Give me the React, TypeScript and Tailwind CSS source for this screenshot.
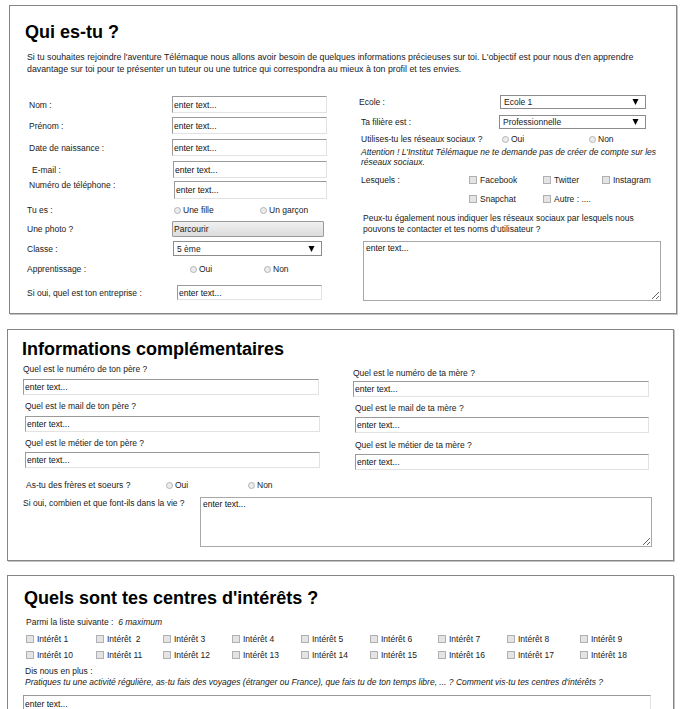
import React from "react";

const INPUT =
  "block bg-white border border-t-[#9a9a9a] border-l-[#9a9a9a] border-r-[#e2e2e2] border-b-[#e2e2e2] pl-[1px] text-[8.5px] text-[#111] outline-none font-['Liberation_Sans',Arial,sans-serif]";

function TextInput({ className }: { className: string }) {
  return <input readOnly value="enter text..." className={`${INPUT} ${className}`} />;
}

function Radio({ label, className = "" }: { label: string; className?: string }) {
  return (
    <span className={`flex items-center gap-[2px] ${className}`}>
      <span className="inline-block h-[7px] w-[7px] rounded-full border border-[#b4b4b4] bg-[#ececec]" />
      {label}
    </span>
  );
}

function Check({ label, className = "" }: { label: string; className?: string }) {
  return (
    <span className={`flex items-center gap-[3px] whitespace-pre ${className}`}>
      <span className="inline-block h-[8px] w-[8px] border border-[#b0b0b0] bg-[#e4e4e4]" />
      {label}
    </span>
  );
}

function Select({ value, className }: { value: string; className: string }) {
  return (
    <div className={`flex items-center justify-between border border-[#8c8c8c] bg-white pl-[3px] pr-[6px] ${className}`}>
      <span>{value}</span>
      <svg width="7" height="6" viewBox="0 0 7 6">
        <polygon points="0.5,0 6.5,0 3.5,6" fill="#000" />
      </svg>
    </div>
  );
}

function Textarea({ className }: { className: string }) {
  return (
    <textarea
      readOnly
      value="enter text..."
      className={`block border border-[#a8a8a8] bg-white px-[2px] py-[1px] text-[8.5px] leading-[11px] text-[#111] outline-none font-['Liberation_Sans',Arial,sans-serif] ${className}`}
    />
  );
}

const interets1 = ["Intérêt 1", "Intérêt  2", "Intérêt 3", "Intérêt 4", "Intérêt 5", "Intérêt 6", "Intérêt 7", "Intérêt 8", "Intérêt 9"];
const interets2 = ["Intérêt 10", "Intérêt 11", "Intérêt 12", "Intérêt 13", "Intérêt 14", "Intérêt 15", "Intérêt 16", "Intérêt 17", "Intérêt 18"];
const colW = ["w-[70px]", "w-[67px]", "w-[69px]", "w-[69px]", "w-[69px]", "w-[68px]", "w-[69px]", "w-[73px]", "w-[60px]"];

export default function App() {
  return (
    <div className="min-h-[709px] overflow-hidden bg-white text-[8.5px] leading-[12px] text-[#1a1a1a] font-['Liberation_Sans',Arial,sans-serif]">
      {/* Qui es-tu */}
      <div className="ml-[9px] mt-[5px] h-[309px] w-[668px] border border-[#858585] bg-white pl-[17px] shadow-[1px_1px_0_#c4c4c4]">
        <h1 className="-ml-[2px] pt-[16px] text-[18px] font-bold leading-[20px] text-black">Qui es-tu ?</h1>
        <p className="mt-[9px] pr-[10px] text-[8.8px]">
          Si tu souhaites rejoindre l'aventure Télémaque nous allons avoir besoin de quelques informations précieuses sur toi. L'objectif est pour nous d'en apprendre davantage sur toi pour te présenter un tuteur ou une tutrice qui correspondra au mieux à ton profil et tes envies.
        </p>
        <div className="mt-[20px] flex">
          {/* left column */}
          <div className="w-[332px] pt-[1px]">
            <div className="flex h-[17px] items-center">
              <span className="w-[145px] pl-[2px]">Nom :</span>
              <TextInput className="h-[17px] w-[155px]" />
            </div>
            <div className="mt-[4px] flex h-[17px] items-center">
              <span className="w-[145px] pl-[2px]">Prénom :</span>
              <TextInput className="h-[17px] w-[155px]" />
            </div>
            <div className="mt-[5px] flex h-[17px] items-center">
              <span className="w-[145px] pl-[2px]">Date de naissance :</span>
              <TextInput className="h-[17px] w-[155px]" />
            </div>
            <div className="mt-[5px] flex h-[17px] items-center">
              <span className="w-[146px] pl-[5px]">E-mail :</span>
              <TextInput className="h-[17px] w-[154px]" />
            </div>
            <div className="mt-[3px] flex h-[18px] items-start">
              <span className="-mt-[2px] w-[147px] pl-[2px]">Numéro de téléphone :</span>
              <TextInput className="h-[18px] w-[153px]" />
            </div>
            <div className="mt-[3px] flex h-[16px] items-center">
              <span className="w-[147px]">Tu es :</span>
              <Radio label="Une fille" className="w-[86px]" />
              <Radio label="Un garçon" />
            </div>
            <div className="mt-[3px] flex h-[16px] items-center">
              <span className="w-[145px]">Une photo ?</span>
              <div className="flex h-[16px] w-[152px] items-center rounded-[1px] border border-[#9a9a9a] bg-gradient-to-b from-[#f0f0f0] to-[#dcdcdc] pl-[1px]">
                Parcourir
              </div>
            </div>
            <div className="mt-[4px] flex h-[15px] items-center">
              <span className="w-[146px]">Classe :</span>
              <Select value="5 ème" className="h-[15px] w-[149px]" />
            </div>
            <div className="mt-[5px] flex h-[16px] items-center">
              <span className="w-[163px]">Apprentissage :</span>
              <Radio label="Oui" className="w-[74px]" />
              <Radio label="Non" />
            </div>
            <div className="mt-[8px] flex h-[15px] items-center">
              <span className="w-[150px]">Si oui, quel est ton entreprise :</span>
              <TextInput className="h-[15px] w-[145px]" />
            </div>
          </div>

          {/* right column */}
          <div className="w-[305px]">
            <div className="flex h-[14px] items-center">
              <span className="w-[141px]">Ecole :</span>
              <Select value="Ecole 1" className="h-[14px] w-[146px]" />
            </div>
            <div className="mt-[6px] flex h-[14px] items-center">
              <span className="w-[140px] pl-[2px]">Ta filière est :</span>
              <Select value="Professionnelle" className="h-[14px] w-[147px]" />
            </div>
            <div className="mt-[4px] flex h-[12px] items-center pl-[2px]">
              <span className="w-[141px]">Utilises-tu les réseaux sociaux ?</span>
              <Radio label="Oui" className="w-[87px]" />
              <Radio label="Non" />
            </div>
            <p className="mt-[2px] pl-[2px] italic leading-[10px]">
              Attention ! L'Institut Télémaque ne te demande pas de créer de compte sur les réseaux sociaux.
            </p>
            <div className="mt-[7px] flex h-[12px] items-center pl-[2px]">
              <span className="w-[108px]">Lesquels :</span>
              <Check label="Facebook" className="w-[74px]" />
              <Check label="Twitter" className="w-[59px]" />
              <Check label="Instagram" />
            </div>
            <div className="mt-[7px] flex h-[12px] items-center pl-[110px]">
              <Check label="Snapchat" className="w-[74px]" />
              <Check label="Autre : ...." />
            </div>
            <p className="mt-[8px] pl-[4px] pr-[20px] leading-[11px]">
              Peux-tu également nous indiquer les réseaux sociaux par lesquels nous pouvons te contacter et tes noms d'utilisateur ?
            </p>
            <div className="mt-[6px] pl-[4px]">
              <Textarea className="h-[60px] w-[298px]" />
            </div>
          </div>
        </div>
      </div>

      {/* Informations complémentaires */}
      <div className="ml-[7px] mt-[15px] h-[232px] w-[667px] border border-[#858585] bg-white pl-[15px] shadow-[1px_1px_0_#c4c4c4]">
        <h2 className="-ml-[1px] pt-[9px] text-[18px] font-bold leading-[20px] text-black">Informations complémentaires</h2>
        <div className="flex">
          <div className="w-[330px]">
            <p className="mt-[4px]">Quel est le numéro de ton père ?</p>
            <TextInput className="mt-[4px] h-[16px] w-[296px]" />
            <p className="mt-[5px] pl-[2px]">Quel est le mail de ton père ?</p>
            <div className="mt-[4px] pl-[2px]">
              <TextInput className="h-[16px] w-[295px]" />
            </div>
            <p className="mt-[5px] pl-[2px]">Quel est le métier de ton père ?</p>
            <div className="mt-[3px] pl-[2px]">
              <TextInput className="h-[16px] w-[295px]" />
            </div>
          </div>
          <div className="w-[300px]">
            <p className="mt-[8px]">Quel est le numéro de ta mère ?</p>
            <TextInput className="mt-[2px] h-[16px] w-[296px]" />
            <p className="mt-[5px] pl-[2px]">Quel est le mail de ta mère ?</p>
            <div className="mt-[3px] pl-[2px]">
              <TextInput className="h-[16px] w-[294px]" />
            </div>
            <p className="mt-[6px] pl-[2px]">Quel est le métier de ta mère ?</p>
            <div className="mt-[3px] pl-[2px]">
              <TextInput className="h-[16px] w-[294px]" />
            </div>
          </div>
        </div>
        <div className="mt-[9px] flex h-[12px] items-center pl-[3px]">
          <span className="w-[140px]">As-tu des frères et soeurs ?</span>
          <Radio label="Oui" className="w-[82px]" />
          <Radio label="Non" />
        </div>
        <div className="mt-[6px] flex items-start">
          <span className="w-[177px]">Si oui, combien et que font-ils dans la vie ?</span>
          <Textarea className="h-[50px] w-[452px]" />
        </div>
      </div>

      {/* Centres d'intérêts */}
      <div className="ml-[7px] mt-[14px] h-[150px] w-[667px] border border-[#858585] bg-white pl-[17px] shadow-[1px_1px_0_#c4c4c4]">
        <h2 className="-ml-[1px] pt-[12px] text-[18px] font-bold leading-[20px] text-black">Quels sont tes centres d'intérêts ?</h2>
        <p className="mt-[8px] pl-[1px]">
          Parmi la liste suivante :&nbsp; <span className="italic">6 maximum</span>
        </p>
        <div className="mt-[5px] flex h-[12px] items-center pl-[1px]">
          {interets1.map((t, i) => (
            <Check key={t} label={t} className={colW[i]} />
          ))}
        </div>
        <div className="mt-[4px] flex h-[12px] items-center pl-[1px]">
          {interets2.map((t, i) => (
            <Check key={t} label={t} className={colW[i]} />
          ))}
        </div>
        <p className="mt-[5px] leading-[11px]">Dis nous en plus :</p>
        <p className="italic leading-[11px]">
          Pratiques tu une activité régulière, as-tu fais des voyages (étranger ou France), que fais tu de ton temps libre, ... ? Comment vis-tu tes centres d'intérêts ?
        </p>
        <div className="mt-[7px] -ml-[2px]">
          <TextInput className="h-[17px] w-[628px]" />
        </div>
      </div>
    </div>
  );
}
